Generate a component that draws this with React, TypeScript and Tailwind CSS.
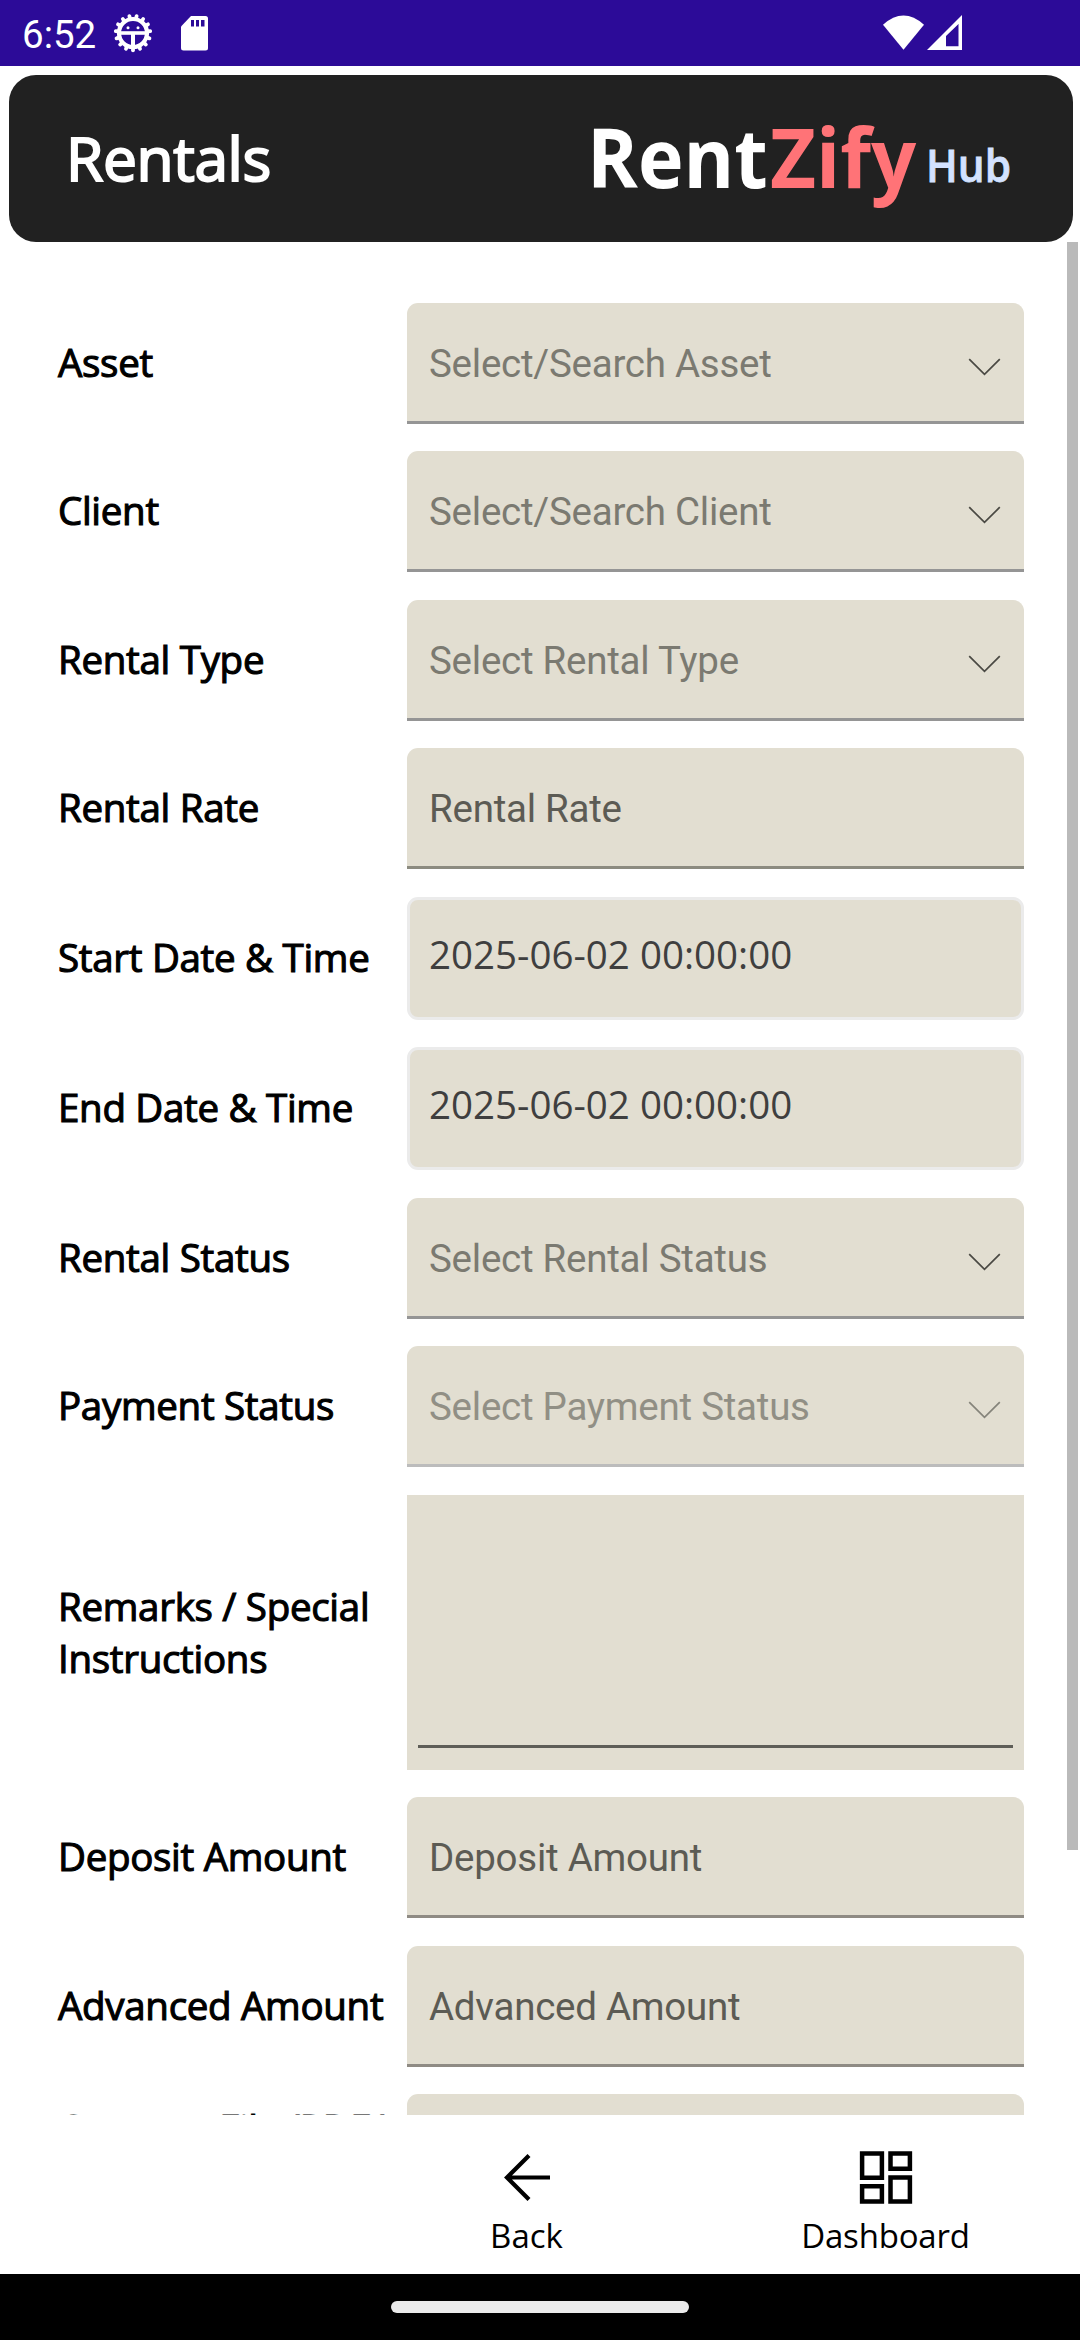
type Kind = 'select' | 'input' | 'date' | 'area';

type Row = {
  label: string;
  text: string;
  kind: Kind;
  gap: string;
  nudge?: string;
  line?: string;
  color?: string;
};

const rows: Row[] = [
  { label: 'Asset', text: 'Select/Search Asset', kind: 'select', gap: 'mt-[61px]', line: 'border-[#959595]', color: 'text-[#7b7a71]' },
  { label: 'Client', text: 'Select/Search Client', kind: 'select', gap: 'mt-[27px]', line: 'border-[#959595]', color: 'text-[#7b7a71]' },
  { label: 'Rental Type', text: 'Select Rental Type', kind: 'select', gap: 'mt-[28px]', line: 'border-[#959595]', color: 'text-[#7b7a71]' },
  { label: 'Rental Rate', text: 'Rental Rate', kind: 'input', gap: 'mt-[27px]', line: 'border-[#8c8b80]', color: 'text-[#5c5b54]' },
  { label: 'Start Date & Time', text: '2025-06-02 00:00:00', kind: 'date', gap: 'mt-[28px]' },
  { label: 'End Date & Time', text: '2025-06-02 00:00:00', kind: 'date', gap: 'mt-[27px]' },
  { label: 'Rental Status', text: 'Select Rental Status', kind: 'select', gap: 'mt-[28px]', line: 'border-[#959595]', color: 'text-[#7b7a71]' },
  { label: 'Payment Status', text: 'Select Payment Status', kind: 'select', gap: 'mt-[27px]', line: 'border-[#bcbcbc]', color: 'text-[#918f85]' },
  { label: 'Remarks / Special Instructions', text: '', kind: 'area', gap: 'mt-[28px]', nudge: 'pb-[1px]' },
  { label: 'Deposit Amount', text: 'Deposit Amount', kind: 'input', gap: 'mt-[27px]', line: 'border-[#8f8b84]', color: 'text-[#5c5b54]' },
  { label: 'Advanced Amount', text: 'Advanced Amount', kind: 'input', gap: 'mt-[28px]', line: 'border-[#8f8b84]', color: 'text-[#5c5b54]' },
  { label: 'Contract File (PDF/ Image)', text: '', kind: 'input', gap: 'mt-[27px]', nudge: 'pb-[1px]', line: 'border-[#8f8b84]', color: 'text-[#5c5b54]' },
];

function Field({ row }: { row: Row }) {
  if (row.kind === 'area') {
    return (
      <div className="flex h-[275px] w-[617px] flex-col justify-end bg-[#e2ded1] px-[11px] pb-[22px]">
        <div className="h-[3px] bg-[#5f5e58]" />
      </div>
    );
  }
  if (row.kind === 'date') {
    return (
      <div className="h-[123px] w-[617px] rounded-[11px] border-[3px] border-[#ebebeb] bg-[#e2ded1] pl-[19px] pt-[28px] text-[38.5px] leading-[52px] text-[#3f3f3f]">
        {row.text}
      </div>
    );
  }
  return (
    <div className={`flex h-[121px] w-[617px] items-center justify-between rounded-t-[11px] border-b-[3px] bg-[#e2ded1] pl-[22px] pr-[23px] font-[Roboto,sans-serif] text-[38.5px] tracking-[-0.25px] ${row.line} ${row.color}`}>
      <span className="whitespace-nowrap pt-[3px]">{row.text}</span>
      {row.kind === 'select' && (
        <svg className="mt-[9px] h-[18px] w-[33px]" viewBox="0 0 33 18" fill="none" stroke={row.label === 'Payment Status' ? '#85847b' : '#4a4943'} strokeWidth="1.7">
          <path d="M1.2 1.2 16.5 16.3 31.8 1.2" />
        </svg>
      )}
    </div>
  );
}

function DebugIcon() {
  const teeth = Array.from({ length: 15 }, (_, i) => i * 24 + 12);
  return (
    <svg className="h-[40px] w-[40px]" viewBox="-20 -20 40 40" fill="none" stroke="#fff">
      <circle r="14" strokeWidth="4.200" />
      {teeth.map((a) => (
        <path key={a} d="M0 -15V-17.300" strokeWidth="3.800" strokeLinecap="round" transform={`rotate(${a})`} />
      ))}
      <path d="M-14 0H14" strokeWidth="3.600" />
      <path d="M0 0V16" strokeWidth="4" />
      <circle cx="-5" cy="-5.300" r="1.500" fill="#fff" stroke="none" />
      <circle cx="5" cy="-5.300" r="1.500" fill="#fff" stroke="none" />
    </svg>
  );
}

export default function App() {
  return (
    <div className="flex h-[2340px] w-[1080px] flex-col overflow-hidden bg-white font-['Open_Sans','Noto_Sans',sans-serif] text-black">
      <div className="flex h-[66px] shrink-0 items-center bg-[#2c0b98] pl-[22px] font-[Roboto,sans-serif] text-[38.5px] text-white">
        <span className="w-[91px] whitespace-nowrap pt-[3px]">6:52</span>
        <DebugIcon />
        <svg className="ml-[28px] h-[35px] w-[27px]" viewBox="0 0 27 35">
          <path fill="#fff" d="M10 0H24.500Q27 0 27 2.500V32Q27 34.500 24.500 34.500H2.500Q0 34.500 0 32V10.500Z" />
          <path fill="#2c0b98" d="M10 4h3v6.500h-3zM15 4h3v6.500h-3zM20 4h3.500v6.500h-3.500z" />
        </svg>
        <svg className="ml-auto mr-[118px] h-[36px] w-[80px]" viewBox="0 0 80 36">
          <path fill="#fff" d="M1 9.700Q21.500 -8.700 42 9.700L21.500 34.700Z" />
          <path fill="#fff" fillRule="evenodd" d="M45 35 80 0V35ZM64 21V31.300H76.500V9Z" />
        </svg>
      </div>

      <header className="mx-[9px] mr-[7px] mt-[9px] flex h-[167px] shrink-0 items-center justify-between rounded-[27px] bg-[#212121] pl-[57px] text-white">
        <h1 className="text-[60.5px] tracking-[-0.4px] [-webkit-text-stroke:2px_#fff]">Rentals</h1>
        <div className="flex h-full w-[486px] items-baseline whitespace-nowrap pt-[26px] font-bold">
          <span className="w-[183px]"><span className="inline-block origin-left scale-x-[0.93] text-[83px] leading-[110px]">Rent</span></span>
          <span className="w-[156px]"><span className="inline-block origin-left scale-x-[0.958] text-[83px] leading-[110px] text-[#ff7377]">Zify</span></span>
          <span className="inline-block origin-left -translate-y-[6px] scale-x-[0.92] text-[46px] font-semibold text-[#d3e2ff] [-webkit-text-stroke:0.8px_#d3e2ff]">Hub</span>
        </div>
      </header>

      <main className="flex h-[1873px] shrink-0 overflow-hidden">
        <div className="w-[1067px] shrink-0">
          {rows.map((row) => (
            <div key={row.label} className={`flex items-center pl-[58px] ${row.gap}`}>
              <div className={`w-[349px] shrink-0 pr-[3px] text-[38.5px] leading-[52px] tracking-[-0.3px] [-webkit-text-stroke:1.1px_#000] ${row.nudge ?? 'pb-[3px]'}`}>{row.label}</div>
              <Field row={row} />
            </div>
          ))}
        </div>
        <div className="h-[1608px] w-[11px] bg-[#bababa]" />
      </main>

      <nav className="grid h-[159px] shrink-0 grid-cols-[347px_359px_359px] text-[33px] leading-[44px]">
        <div />
        <div className="flex flex-col items-center pt-[33px]">
          <svg className="h-[58px] w-[50px]" viewBox="0 0 50 58" fill="none" stroke="#000" strokeWidth="4.200">
            <path d="M4 29.500H48M27 7.500 5 29.500 27 51.500" />
          </svg>
          <span className="mt-[8px]">Back</span>
        </div>
        <div className="flex flex-col items-center pt-[33px]">
          <svg className="h-[58px] w-[54px]" viewBox="0 0 54 58" fill="none" stroke="#000" strokeWidth="4.500">
            <path d="M3.100 5.600H22.900V29.700H3.100ZM31.500 5.600H50.900V20.700H31.500ZM3.100 38.300H22.900V53.400H3.100ZM31.500 29.600H50.900V53.400H31.500Z" />
          </svg>
          <span className="mt-[8px] tracking-[-0.2px]">Dashboard</span>
        </div>
      </nav>

      <div className="flex h-[66px] shrink-0 items-center justify-center bg-black">
        <div className="h-[12px] w-[298px] rounded-full bg-[#ebebeb]" />
      </div>
    </div>
  );
}
